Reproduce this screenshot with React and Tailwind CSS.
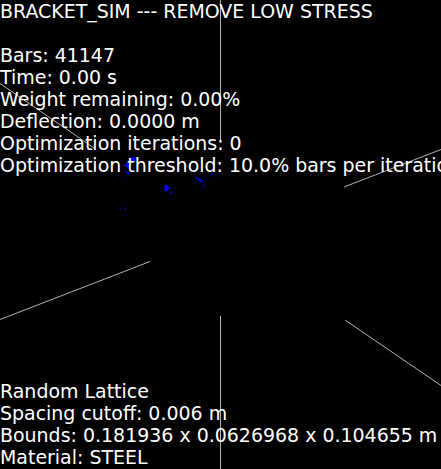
const summary = [
  'BRACKET_SIM --- REMOVE LOW STRESS',
  '',
  'Bars: 41147',
  'Time: 0.00 s',
  'Weight remaining: 0.00%',
  'Deflection: 0.0000 m',
  'Optimization iterations: 0',
  'Optimization threshold: 10.0% bars per iteration',
];

const model = [
  'Random Lattice',
  'Spacing cutoff: 0.006 m',
  'Bounds: 0.181936 x 0.0626968 x 0.104655 m',
  'Material: STEEL',
];

// Runs of lattice pixels: x, y, width, height
const lattice = [
  [131, 157, 4, 1], [130, 158, 6, 1], [129, 159, 7, 1], [129, 160, 7, 1], [129, 161, 5, 1],
  [127, 162, 5, 1], [126, 163, 5, 1], [125, 164, 5, 2], [126, 166, 4, 1], [127, 167, 3, 1], [128, 168, 1, 1],
  [125, 171, 2, 1], [126, 172, 3, 1], [127, 173, 2, 1], [124, 178, 1, 1],
  [165, 185, 2, 1], [164, 186, 4, 1], [164, 187, 5, 1], [164, 188, 6, 1], [164, 189, 4, 1], [165, 190, 3, 1], [166, 191, 1, 1],
  [172, 191, 1, 1], [171, 192, 1, 1], [170, 193, 2, 1],
  [196, 177, 2, 1], [197, 178, 2, 1], [198, 179, 3, 1], [198, 180, 5, 1], [200, 181, 1, 1], [204, 181, 1, 1],
  [200, 182, 1, 1], [202, 185, 2, 1], [205, 187, 1, 1],
  [211, 173, 1, 1], [211, 174, 2, 1], [213, 175, 1, 1], [211, 178, 1, 1],
  [123, 205, 1, 1], [125, 208, 1, 2],
];

function Scene() {
  return (
    <svg className="absolute inset-0" width="441" height="469" viewBox="0 0 441 469" aria-hidden="true">
      <g stroke="#b2b2b2" strokeWidth="1">
        <path d="M220.5 0V141M220.5 316V469" />
        <path d="M0 83.5L94 148M344 187L441 149.5M0 319.5L150 261.5M345 320L441 385.5" />
      </g>
      <g fill="#0000ff" shapeRendering="crispEdges">
        {lattice.map(([x, y, width, height]) => (
          <rect key={`${x}-${y}`} x={x} y={y} width={width} height={height} />
        ))}
      </g>
    </svg>
  );
}

function Readout({ lines }) {
  return (
    <div>
      {lines.map((line, i) => (
        <p key={i} className="h-[22px] whitespace-pre">{line}</p>
      ))}
    </div>
  );
}

export default function App() {
  return (
    <main className="relative h-[469px] w-[441px] overflow-hidden bg-black font-['DejaVu_Sans',sans-serif] text-[18.97px] leading-[22px] text-white">
      <Scene />
      <div className="relative flex h-full flex-col justify-between pb-px">
        <Readout lines={summary} />
        <Readout lines={model} />
      </div>
    </main>
  );
}
